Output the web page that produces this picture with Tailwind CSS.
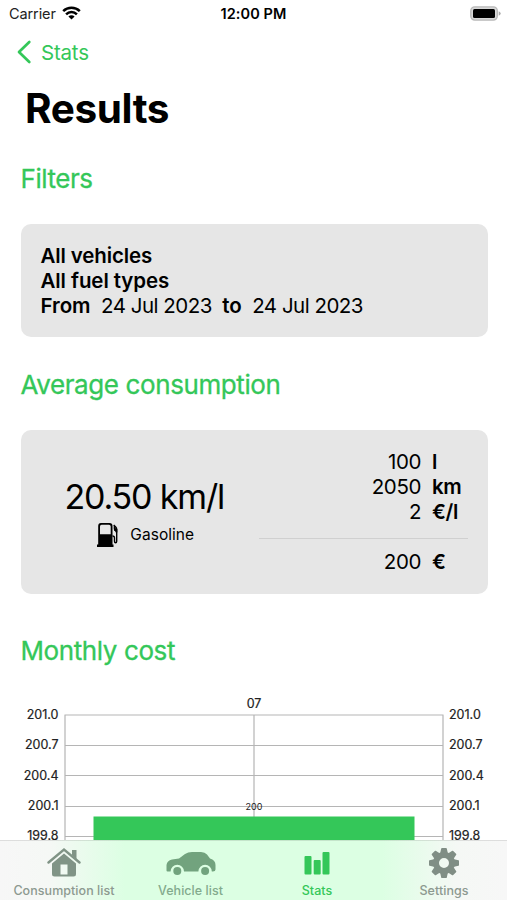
<!DOCTYPE html>
<html lang="en">
<head>
<meta charset="utf-8">
<title>Results</title>
<script src="https://cdn.jsdelivr.net/npm/@tailwindcss/browser@4"></script>
</head>
<body class="bg-white">
<div class="relative flex h-[900px] w-[507px] flex-col overflow-hidden bg-white font-['Inter','Liberation_Sans',sans-serif] text-black">
  <header class="grid h-7 shrink-0 grid-cols-3 items-center px-[9px] text-[14.5px] leading-7">
    <div class="flex items-center gap-[6px] text-[#222]">
      <span class="tracking-[-0.1px]">Carrier</span>
      <svg class="mb-[2px] h-[14px] w-[19px]" viewBox="0 0 19 14" fill="none" stroke="#000" stroke-width="2.5"><path d="M1.2 5.1a11.8 11.8 0 0 1 16.6 0M4.1 8.3a7.6 7.6 0 0 1 10.8 0"/><path d="M9.5 13.6 6.4 10.6a4.4 4.4 0 0 1 6.2 0Z" fill="#000" stroke="none"/></svg>
    </div>
    <div class="text-center font-semibold tracking-[0.1px] whitespace-nowrap">12:00 PM</div>
    <svg class="mr-[-3px] mb-[2px] h-[15px] w-[31px] justify-self-end" viewBox="0 0 31 15"><rect x=".8" y=".9" width="26.500" height="13.200" rx="4" fill="#d8d8d8" stroke="#b8b8b8" stroke-width="1.400"/><rect x="3" y="3" width="22" height="9" rx="1.500"/><path d="M28.700 5.300q2 .8 2 2.200t-2 2.200Z" fill="#aaa"/></svg>
  </header>
  <nav class="flex h-12 shrink-0 items-center gap-[9px] pl-4 text-[20.5px] text-[#34c759]">
    <svg class="h-6 w-4" viewBox="0 0 16 24" fill="none" stroke="currentColor" stroke-width="2.700" stroke-linecap="round" stroke-linejoin="round"><path d="M13.300 2 3 12l10.300 10"/></svg>
    <span class="pt-[2px] tracking-[-0.2px]">Stats</span>
  </nav>
  <h1 class="h-[66px] shrink-0 pl-[25px] text-[40.500px] leading-[66px] font-bold tracking-[-0.4px]">Results</h1>
  <main class="flex shrink-0 flex-col pr-[19.500px] pl-[20.500px]">
    <h2 class="mt-[17px] h-10 text-[26px] leading-10 tracking-[-0.450px] text-[#34c759] [-webkit-text-stroke:0.300px_#34c759]">Filters</h2>
    <section class="mt-[25px] h-[113px] rounded-[10px] bg-[#e6e6e6] px-5 pt-[19px] text-[20.500px] leading-[25px]">
      <p class="font-semibold tracking-[-0.120px]">All vehicles</p>
      <p class="font-semibold tracking-[-0.080px]">All fuel types</p>
      <p class="flex gap-[10.500px] tracking-[-0.500px]"><b class="font-semibold tracking-[-0.050px]">From</b><span>24 Jul 2023</span><b class="font-semibold tracking-[-0.100px]">to</b><span>24 Jul 2023</span></p>
    </section>
    <h2 class="mt-[28px] h-10 text-[26px] leading-10 tracking-[-0.400px] text-[#34c759] [-webkit-text-stroke:0.300px_#34c759]">Average consumption</h2>
    <section class="mt-[25px] flex h-[163.500px] rounded-[10px] bg-[#e6e6e6]">
      <div class="flex w-[238.500px] flex-col items-center pt-[45px] pl-[9px]">
        <div class="text-[34px] leading-[44px] tracking-[-1.150px] whitespace-nowrap">20.50 km/l</div>
        <div class="flex h-[31px] items-center gap-3 pl-[3px] text-[15.500px] tracking-[0.050px]">
          <svg class="h-6 w-[21px]" viewBox="0 0 21 24"><path fill-rule="evenodd" d="M4 0h8.500Q15.500 0 15.500 3v18.500h1V24H0v-2.500h1.200V3Q1.200 0 4 0ZM3 3.500v7.800h10.700V3.500Q13.700 1.800 12 1.800H4.600Q3 1.800 3 3.500Z"/><path d="M15.500 13q2 0 2 2v3.300q0 1.500 1.100 1.500t1.100-1.500v-8q0-1.600-1.300-3l-1-1.300V3M16.700 2l2 2q1 1 1 2.500v4" fill="none" stroke="#000" stroke-width="1.400"/><path d="M17 4.500 20.300 6v3.500L17 7.500Z"/></svg>
          <span class="pt-px">Gasoline</span>
        </div>
      </div>
      <div class="w-[209px] pt-[19px] text-[20.500px] leading-[25px] tracking-[-0.400px]">
        <div class="grid grid-cols-[162px_1fr] gap-x-[11px]">
          <span class="text-right">100</span><b class="font-semibold">l</b>
          <span class="text-right">2050</span><b class="font-semibold">km</b>
          <span class="text-right">2</span><b class="font-semibold">€/l</b>
        </div>
        <div class="mt-[14px] mb-[10px] h-px bg-[#d0d0d0]"></div>
        <div class="grid grid-cols-[162px_1fr] gap-x-[11px]">
          <span class="text-right">200</span><b class="font-semibold">€</b>
        </div>
      </div>
    </section>
    <h2 class="mt-[37.500px] h-10 text-[26px] leading-10 tracking-[-0.400px] text-[#34c759] [-webkit-text-stroke:0.300px_#34c759]">Monthly cost</h2>
  </main>
  <svg class="mt-[19px] h-[210px] w-[507px] shrink-0" viewBox="0 690 507 210" font-size="12.500" fill="#222">
    <path d="M64.500 715H443.500M64.500 745.500H443.500M64.500 775.500H443.500M64.500 806.500H443.500M64.500 836.500H443.500M65 715V900M254 715V900M443 715V900" fill="none" stroke="#b5b5b5" stroke-width="1.200"/>
    <rect x="93.500" y="816.500" width="321" height="84" fill="#34c759"/>
    <g text-anchor="end" stroke="#222" stroke-width=".2"><text x="58.500" y="718.500">201.0</text><text x="58.500" y="749">200.7</text><text x="58.500" y="779.500">200.4</text><text x="58.500" y="810">200.1</text><text x="58.500" y="840">199.8</text></g>
    <g stroke="#222" stroke-width=".2"><text x="449" y="718.500">201.0</text><text x="449" y="749">200.7</text><text x="449" y="779.500">200.4</text><text x="449" y="810">200.1</text><text x="449" y="840">199.8</text></g>
    <text x="254" y="708" text-anchor="middle" stroke="#222" stroke-width=".2">07</text>
    <text x="254" y="810" text-anchor="middle" font-size="9">200</text>
  </svg>
  <footer class="absolute inset-x-0 bottom-0 grid h-[60px] grid-cols-[128px_125px_128px_126px] border-t border-black/10 bg-[linear-gradient(90deg,#f7f7f7_0,#f5f8f5_50px,#dcffe3_125px,#dcffe3_382px,#f5f8f5_457px,#f7f7f7_507px)] text-[12.500px] font-medium tracking-[0.050px] text-[#8d9990]">
    <div class="flex flex-col items-center">
      <svg class="mt-[6px] h-8 w-[34px]" viewBox="0 0 34 32" fill="#809486"><path d="M25 3h4.500v9.500L25 8Z"/><path d="M1.500 15.500 17 2.500l15.500 13" fill="none" stroke="#809486" stroke-width="2.400" stroke-linecap="round"/><path fill-rule="evenodd" d="M17 6.500 29 16.500V27q0 2.500-2.500 2.500h-19Q5 29.500 5 27V16.500ZM13.500 17.500v10h7v-10Z"/></svg>
      <span class="mt-[4px] leading-4 whitespace-nowrap">Consumption list</span>
    </div>
    <div class="flex flex-col items-center text-[#83aa8d]">
      <svg class="mt-[6px] h-8 w-[50px]" viewBox="0 0 50 32" fill="#72a37e"><path d="M.5 23.500V18Q1 13.500 6 12.500L13 11.500 19 7Q22 5 26 5h9q4 0 6 2.500l3 4Q49.500 13 49.500 18v4.500q0 2-2.500 2h-1.200a6.700 6.700 0 0 0-13.400 0H18a6.700 6.700 0 0 0-13.400 0H1.500Q.5 24.500.5 23.500Z"/><circle cx="11.300" cy="24" r="4"/><circle cx="39.100" cy="24" r="4"/></svg>
      <span class="mt-[4px] leading-4">Vehicle list</span>
    </div>
    <div class="flex flex-col items-center text-[#34c759]">
      <svg class="mt-[6px] h-8 w-[26px]" viewBox="0 0 26 32" fill="currentColor"><rect x="0.500" y="9" width="7" height="18.500" rx="1"/><rect x="9.700" y="13" width="7" height="14.500" rx="1"/><rect x="18.500" y="5" width="7" height="22.500" rx="1"/></svg>
      <span class="mt-[4px] leading-4">Stats</span>
    </div>
    <div class="flex flex-col items-center">
      <svg class="mt-[6px] h-8 w-8" viewBox="-16 -16 32 32" fill="#808e85"><circle r="8" fill="none" stroke="#808e85" stroke-width="6"/><path id="t" d="M-3.800-10 -2.800-14.500Q-2.700-15-2-15H2Q2.700-15 2.800-14.500L3.800-10Z"/><use href="#t" transform="rotate(45)"/><use href="#t" transform="rotate(90)"/><use href="#t" transform="rotate(135)"/><use href="#t" transform="rotate(180)"/><use href="#t" transform="rotate(225)"/><use href="#t" transform="rotate(270)"/><use href="#t" transform="rotate(315)"/></svg>
      <span class="mt-[4px] leading-4">Settings</span>
    </div>
  </footer>
</div>
</body>
</html>
